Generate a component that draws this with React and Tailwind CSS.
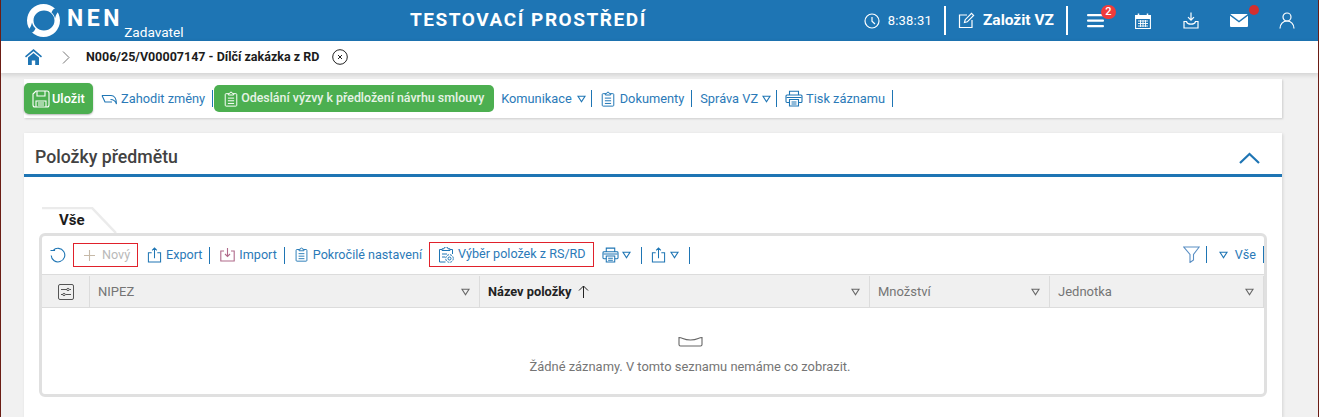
import React from 'react';

const Sep = ({ className = 'h-[17px]' }) => <span className={`w-px shrink-0 bg-[#1e75b4] ${className}`} />;

const Tri = ({ className = 'text-[#1e75b4]' }) => (
  <svg width="9" height="8" viewBox="0 0 9 8" fill="none" stroke="currentColor" strokeWidth="1.1" className={`shrink-0 ${className}`}>
    <path d="M1 1.2h7L4.5 6.8z" />
  </svg>
);

const Clipboard = ({ size = 17, color = '#1e75b4' }) => (
  <svg width={size} height={size} viewBox="0 0 16 18" fill="none" stroke={color} strokeWidth="1.1" className="shrink-0">
    <path d="M5 3H2.5a1 1 0 0 0-1 1v12a1 1 0 0 0 1 1h11a1 1 0 0 0 1-1V4a1 1 0 0 0-1-1H11" />
    <path d="M5 4.5V2.8h1.5a1.5 1.5 0 0 1 3 0H11v1.700z" />
    <path d="M4.5 8h7M4.5 11h7M4.5 14h7" />
  </svg>
);

const Printer = ({ size = 18 }) => (
  <svg width={size} height={size - 1} viewBox="0 0 18 17" fill="none" stroke="#1e75b4" strokeWidth="1.1" className="shrink-0">
    <path d="M4.5 5V1.2h9V5M4.5 12.5H2a1 1 0 0 1-1-1V6a1 1 0 0 1 1-1h14a1 1 0 0 1 1 1v5.5a1 1 0 0 1-1 1h-2.5" />
    <path d="M4.5 9.5h9V16h-9zM1.500 7.500h15M6.500 12h5M6.500 14h5" />
  </svg>
);

const ShareUp = ({ size = 15 }) => (
  <svg width={size} height={size + 1} viewBox="0 0 16 17" fill="none" stroke="#1e75b4" strokeWidth="1.1" className="shrink-0">
    <path d="M5 6H1.500v10h13V6H11M8 12V1M5.500 3.500 8 1l2.500 2.500" />
  </svg>
);

const TopIcon = ({ children, className = '' }) => <span className={`relative flex items-center justify-center ${className}`}>{children}</span>;

const Header = () => (
  <header className="flex h-[41px] items-center bg-[#1e75b4] text-white">
    <div className="ml-[26px] flex w-[358px] items-center">
      <svg width="35" height="35" viewBox="0 0 35 35" className="shrink-0">
        <path fillRule="evenodd" fill="#fff" d="M17.500 1a16.500 16.500 0 1 0 0 33 16.500 16.500 0 0 0 0-33zM18 7.500c6 0 10.500 4.500 10.500 10 0 5.500-4.500 10-10.500 10S7.500 23 7.500 17.500c0-5.500 4.500-10 10.500-10z" />
        <path d="M35 7C31 4 27 5 25.500 9.500c2 1.500 3 3.500 3.500 6C30 11 31.500 8.500 35 7z" fill="#1e75b4" />
        <path d="M0 28c4 3 8 2 9.500-2.500C8 24 6.500 22 6 19.500 5 24 3.500 26.500 0 28z" fill="#1e75b4" />
      </svg>
      <span className="ml-[6px] self-start pt-[4px] text-[23px] leading-[28px] font-bold tracking-[3.6px]">NEN</span>
      <span className="mt-[23px] ml-[1px] text-[13.6px] leading-[16px]">Zadavatel</span>
    </div>
    <div className="w-[260px] pl-[26px] text-[19px] font-bold tracking-[1.55px] whitespace-nowrap">TESTOVACÍ PROSTŘEDÍ</div>
    <div className="ml-auto flex items-center">
      <svg width="16" height="16" viewBox="0 0 16 16" fill="none" stroke="#fff" strokeWidth="1.2" className="mr-[8px]">
        <circle cx="8" cy="8" r="7" />
        <path d="M8 4v4.300l3 2.700" />
      </svg>
      <span className="text-[13px] tracking-[0.2px]">8:38:31</span>
      <span className="mr-[12px] ml-[12px] h-[29px] w-[2px] bg-white" />
      <svg width="17" height="17" viewBox="0 0 17 17" fill="none" stroke="#fff" strokeWidth="1.2" className="mr-[8px]">
        <path d="M9 3H1.500v12.500H14V8" />
        <path d="M6.500 10.500l.7-2.800L13.500 1.300l2.100 2.100-6.300 6.400z" />
      </svg>
      <span className="text-[15.500px] font-bold">Založit VZ</span>
      <span className="mx-[12px] h-[29px] w-[2px] bg-white" />
      <TopIcon className="ml-[7px] w-[17px]">
        <svg width="17" height="14" viewBox="0 0 17 14" fill="#fff"><rect y="0" width="17" height="2.300" rx="1" /><rect y="5.500" width="17" height="2.300" rx="1" /><rect y="11" width="17" height="2.300" rx="1" /></svg>
        <span className="absolute top-[-9px] left-[14px] flex h-[14px] w-[15px] items-center justify-center rounded-full bg-[#ef3b3b] text-[11px] leading-none font-medium">2</span>
      </TopIcon>
      <TopIcon className="ml-[31px]">
        <svg width="16" height="16" viewBox="0 0 16 16" fill="none" stroke="#fff" strokeWidth="1.100">
          <path d="M.6 2.500h14.800v13H.6z" />
          <path d="M.6 2.500h14.800v3H.6z" fill="#fff" />
          <path d="M3.500.5v3M12.500.5v3" strokeWidth="1.500" />
          <path d="M3 8h10M3 10.500h10M3 13h10M5.500 7v7M8 7v7M10.500 7v7" strokeWidth="0.900" />
        </svg>
      </TopIcon>
      <TopIcon className="ml-[32px]">
        <svg width="16" height="17" viewBox="0 0 16 17" fill="none" stroke="#fff" strokeWidth="1.200">
          <path d="M8 .5v7M5 5.200l3 3 3-3" />
          <path d="M3.500 9.500H1v6.500h14V9.500h-2.500c-.5 2-2.300 2.700-4.500 2.700s-4-.7-4.500-2.700z" />
        </svg>
      </TopIcon>
      <TopIcon className="ml-[31px]">
        <svg width="18" height="13" viewBox="0 0 18 13" fill="#fff">
          <path d="M1 0h16a1 1 0 0 1 .6.3L9 6.700.4.300A1 1 0 0 1 1 0z" />
          <path d="M0 1.800 9 8.500l9-6.700V12a1 1 0 0 1-1 1H1a1 1 0 0 1-1-1z" />
        </svg>
        <span className="absolute top-[-9px] left-[19px] h-[10px] w-[10px] rounded-full bg-[#d32f2f]" />
      </TopIcon>
      <TopIcon className="mr-[24px] ml-[31px]">
        <svg width="16" height="17" viewBox="0 0 16 17" fill="none" stroke="#fff" strokeWidth="1.200">
          <circle cx="8" cy="5" r="4" />
          <path d="M1 16.500c0-4.500 3-7.500 7-7.500s7 3 7 7.500" />
        </svg>
      </TopIcon>
    </div>
  </header>
);

const Breadcrumb = () => (
  <div className="relative flex h-[32px] items-center bg-white shadow-[0_2px_5px_rgba(0,0,0,0.14)]">
    <svg width="17" height="16" viewBox="0 0 17 16" fill="#1e75b4" className="ml-[25px]">
      <path d="M8.500 0 17 7.300l-1 1.200-7.500-6.300L1 8.500 0 7.300z" />
      <path d="M8.500 4 14 8.600V16h-3.800v-4.500H6.800V16H3V8.600z" />
    </svg>
    <svg width="8" height="13" viewBox="0 0 8 13" fill="none" stroke="#777" strokeWidth="1" className="ml-[20px]">
      <path d="m1 .5 6 6-6 6" />
    </svg>
    <span className="ml-[16px] text-[12.500px] font-bold text-[#1c1c1c]">N006/25/V00007147 - Dílčí zakázka z RD</span>
    <svg width="16" height="16" viewBox="0 0 16 16" fill="none" stroke="#222" strokeWidth="1" className="ml-[13px]">
      <circle cx="8" cy="8" r="7.300" />
      <path d="m6 6 4 4M10 6l-4 4" />
    </svg>
  </div>
);

const ActionBar = () => (
  <div className="mt-[6px] ml-[24px] flex h-[39px] w-[1258px] items-center bg-white text-[12.800px] text-[#2b7ab8] shadow-[1px_1px_2px_rgba(0,0,0,0.15)]">
    <button className="flex h-[31px] w-[69px] items-center gap-[2px] rounded-[5px] bg-[#4caf50] pl-[8px] font-medium text-white shadow-[0_1px_2px_rgba(0,0,0,0.3)]">
      <svg width="18" height="18" viewBox="0 0 18 18" fill="none" stroke="#fff" strokeWidth="1.100" className="shrink-0">
        <path d="M1 4 4 1h11a2 2 0 0 1 2 2v12a2 2 0 0 1-2 2H3a2 2 0 0 1-2-2z" />
        <path d="M5 1v5h8V1M4 17v-6h10v6M6 13h6M6 15h6" />
      </svg>
      Uložit
    </button>
    <svg width="17" height="12" viewBox="0 0 17 12" fill="none" stroke="#1e75b4" strokeWidth="1.100" className="ml-[8px]">
      <path d="M1 2.500h9c3 0 5.500 3 5.500 8.500-1-2.800-3-4.500-6-4.500" />
      <path d="M1 2.500 4 9h7" />
    </svg>
    <span className="ml-[3px]">Zahodit změny</span>
    <Sep className="ml-[7px] h-[17px]" />
    <button className="ml-px flex h-[27px] w-[280px] items-center rounded-[5px] bg-[#4caf50] pl-[9px] font-medium whitespace-nowrap text-[#e6f3e6]">
      <Clipboard size={16} color="#fff" />
      <span className="ml-[2px] text-[12.400px]">Odeslání výzvy k předložení návrhu smlouvy</span>
    </button>
    <span className="ml-[7px]">Komunikace</span>
    <span className="ml-[5px]"><Tri /></span>
    <Sep className="ml-[5px] h-[17px]" />
    <span className="ml-[8px]"><Clipboard size={16} /></span>
    <span className="ml-[4px]">Dokumenty</span>
    <Sep className="ml-[7px] h-[17px]" />
    <span className="ml-[8px]">Správa VZ</span>
    <span className="ml-[4px]"><Tri /></span>
    <Sep className="ml-[5px] h-[17px]" />
    <span className="ml-[8px]"><Printer /></span>
    <span className="ml-[3px]">Tisk záznamu</span>
    <Sep className="ml-[7px] h-[17px]" />
  </div>
);

const ToolLink = ({ icon, children, gap = 'ml-[4px]' }) => (
  <span className="flex items-center whitespace-nowrap">
    {icon}
    <span className={gap}>{children}</span>
  </span>
);

const Th = ({ w, children, bold }) => (
  <div className={`flex h-full shrink-0 items-center justify-between border-r border-[#dcdcdc] pr-[9px] pl-[8px] ${w}`}>
    {bold ? (
      <span className="flex items-center gap-[6px] text-[12.800px] font-bold text-[#222]">
        {children}
        <svg width="11" height="13" viewBox="0 0 11 13" fill="none" stroke="#222" strokeWidth="1"><path d="M5.500 13V1M1 5.500 5.500 1 10 5.500" /></svg>
      </span>
    ) : (
      <span className="text-[#757575]">{children}</span>
    )}
    <Tri className="text-[#666]" />
  </div>
);

const ItemsTable = () => (
  <div className="ml-[15px] h-[164px] w-[1228px] rounded-[6px] border-[3px] border-[#e0e0e0] bg-white">
    <div className="flex h-[38px] items-center text-[12.600px] text-[#2b7ab8]">
      <svg width="16" height="16" viewBox="0 0 16 16" fill="none" stroke="#1e75b4" strokeWidth="1.100" className="ml-[8px] shrink-0">
        <path d="M3 3.500A6.800 6.800 0 1 1 1.200 8.500M.5 3.500h4v-1" />
      </svg>
      <span className="ml-[7px] flex h-[24px] w-[65px] items-center border border-[#e0212b] pl-[9px] text-[#b9b9b9]">
        <svg width="13" height="13" viewBox="0 0 13 13" stroke="#c6b9a8" strokeWidth="1.100" className="shrink-0"><path d="M6.500 1v11M1 6.500h11" /></svg>
        <span className="ml-[6px]">Nový</span>
      </span>
      <span className="ml-[9px]"><ToolLink icon={<ShareUp />}>Export</ToolLink></span>
      <Sep className="ml-[7px] h-[17px]" />
      <span className="ml-[10px]">
        <ToolLink icon={
          <svg width="15" height="15" viewBox="0 0 15 15" fill="none" stroke="#b06a8a" strokeWidth="1.100" className="shrink-0">
            <path d="M4 4H.8v10h13.400V4H11M7.500 1v8M5 7l2.500 2.500L10 7" />
          </svg>
        }>Import</ToolLink>
      </span>
      <Sep className="ml-[7px] h-[17px]" />
      <span className="ml-[9px]"><ToolLink icon={<Clipboard size={15} />}>Pokročilé nastavení</ToolLink></span>
      <span className="-mt-px ml-[7px] flex h-[25px] w-[165px] items-center border border-[#e0212b] pl-[8px] whitespace-nowrap">
        <svg width="16" height="16" viewBox="0 0 16 16" fill="none" stroke="#1e75b4" strokeWidth="1" className="shrink-0">
          <path d="M4 2.500H1.500v12.500h6M12 2.500h2.500V7M4 3.500V1.800h2a1.800 1.800 0 0 1 4 0h2v1.700z" />
          <circle cx="11.500" cy="11.500" r="1.500" />
          <circle cx="11.500" cy="11.500" r="3.800" strokeDasharray="2 1" />
          <path d="M4 7h5M4 10h3" />
        </svg>
        <span className="ml-[4px]">Výběr položek z RS/RD</span>
      </span>
      <span className="ml-[8px]"><Printer size={17} /></span>
      <span className="ml-[3px]"><Tri /></span>
      <Sep className="ml-[10px] h-[17px]" />
      <span className="ml-[9px]"><ShareUp /></span>
      <span className="ml-[4px]"><Tri /></span>
      <Sep className="ml-[10px] h-[17px]" />
      <div className="ml-auto flex items-center">
        <svg width="17" height="17" viewBox="0 0 17 17" fill="none" stroke="#5a8fc4" strokeWidth="1.100" className="shrink-0">
          <path d="M.8 1h15.400l-5.700 7.500v5.500l-3.500 2.500v-8z" />
        </svg>
        <Sep className="ml-[6px] h-[17px]" />
        <span className="ml-[12px]"><Tri /></span>
        <span className="ml-[7px]">Vše</span>
        <Sep className="ml-[7px] h-[17px]" />
      </div>
    </div>
    <div className="flex h-[34px] items-center border-y border-[#dcdcdc] bg-[#f0f0f0] pt-[1px] text-[13px]">
      <div className="flex h-full w-[48px] shrink-0 items-center justify-center border-r border-[#dcdcdc]">
        <svg width="16" height="16" viewBox="0 0 16 16" fill="none" stroke="#555" strokeWidth="1">
          <rect x=".5" y=".5" width="15" height="15" rx="1.500" />
          <path d="M3 5.500h6M11.500 5.500H13M3 10.500h2M7.500 10.500H13" />
          <circle cx="10" cy="5.500" r="1.200" />
          <circle cx="6" cy="10.500" r="1.200" />
        </svg>
      </div>
      <Th w="w-[390px]">NIPEZ</Th>
      <Th w="w-[390px]" bold>Název položky</Th>
      <Th w="w-[180px]">Množství</Th>
      <Th w="w-[214px]">Jednotka</Th>
    </div>
    <div className="flex flex-col items-center pt-[28px] pl-[74px] text-[12.900px] text-[#757575]">
      <svg width="25" height="11" viewBox="0 0 25 11" fill="none" stroke="#666" strokeWidth="1.100">
        <path d="M1 1.500c4 0 4 2.500 11.500 2.500S20 1.500 24 1.500v7a1.500 1.500 0 0 1-1.500 1.500h-20A1.500 1.500 0 0 1 1 8.500z" />
      </svg>
      <span className="mt-[10px]">Žádné záznamy. V tomto seznamu nemáme co zobrazit.</span>
    </div>
  </div>
);

const ItemsPanel = () => (
  <section className="mt-[15px] ml-[24px] h-[284px] w-[1258px] bg-white shadow-[1px_1px_3px_rgba(0,0,0,0.12)]">
    <div className="flex h-[44px] items-center justify-between border-b-[3px] border-[#1e75b4] pt-[8px] pr-[22px] pl-[11px]">
      <h2 className="text-[17.700px] font-medium text-[#424242]">Položky předmětu</h2>
      <svg width="21" height="12" viewBox="0 0 21 12" fill="none" stroke="#1e75b4" strokeWidth="2.200"><path d="m1 11 9.500-9 9.500 9" /></svg>
    </div>
    <div className="pt-[30px]">
      <div className="relative ml-[18px] flex h-[26px] w-[50px] items-center pl-[17px] text-[15px] font-bold text-[#1c1c1c]">
        Vše
        <svg width="78" height="26" viewBox="0 0 78 26" className="absolute top-0 left-0" fill="none" stroke="#ebebeb" strokeWidth="2.500"><path d="M0 1h50L74 26" /></svg>
      </div>
      <ItemsTable />
    </div>
  </section>
);

export default function App() {
  return (
    <div className="h-[417px] w-[1319px] overflow-hidden border-x border-[#6b1d14] bg-[#f1f1f1] font-['Roboto',sans-serif]">
      <div className="-mx-px">
        <Header />
        <Breadcrumb />
        <ActionBar />
        <ItemsPanel />
      </div>
    </div>
  );
}
